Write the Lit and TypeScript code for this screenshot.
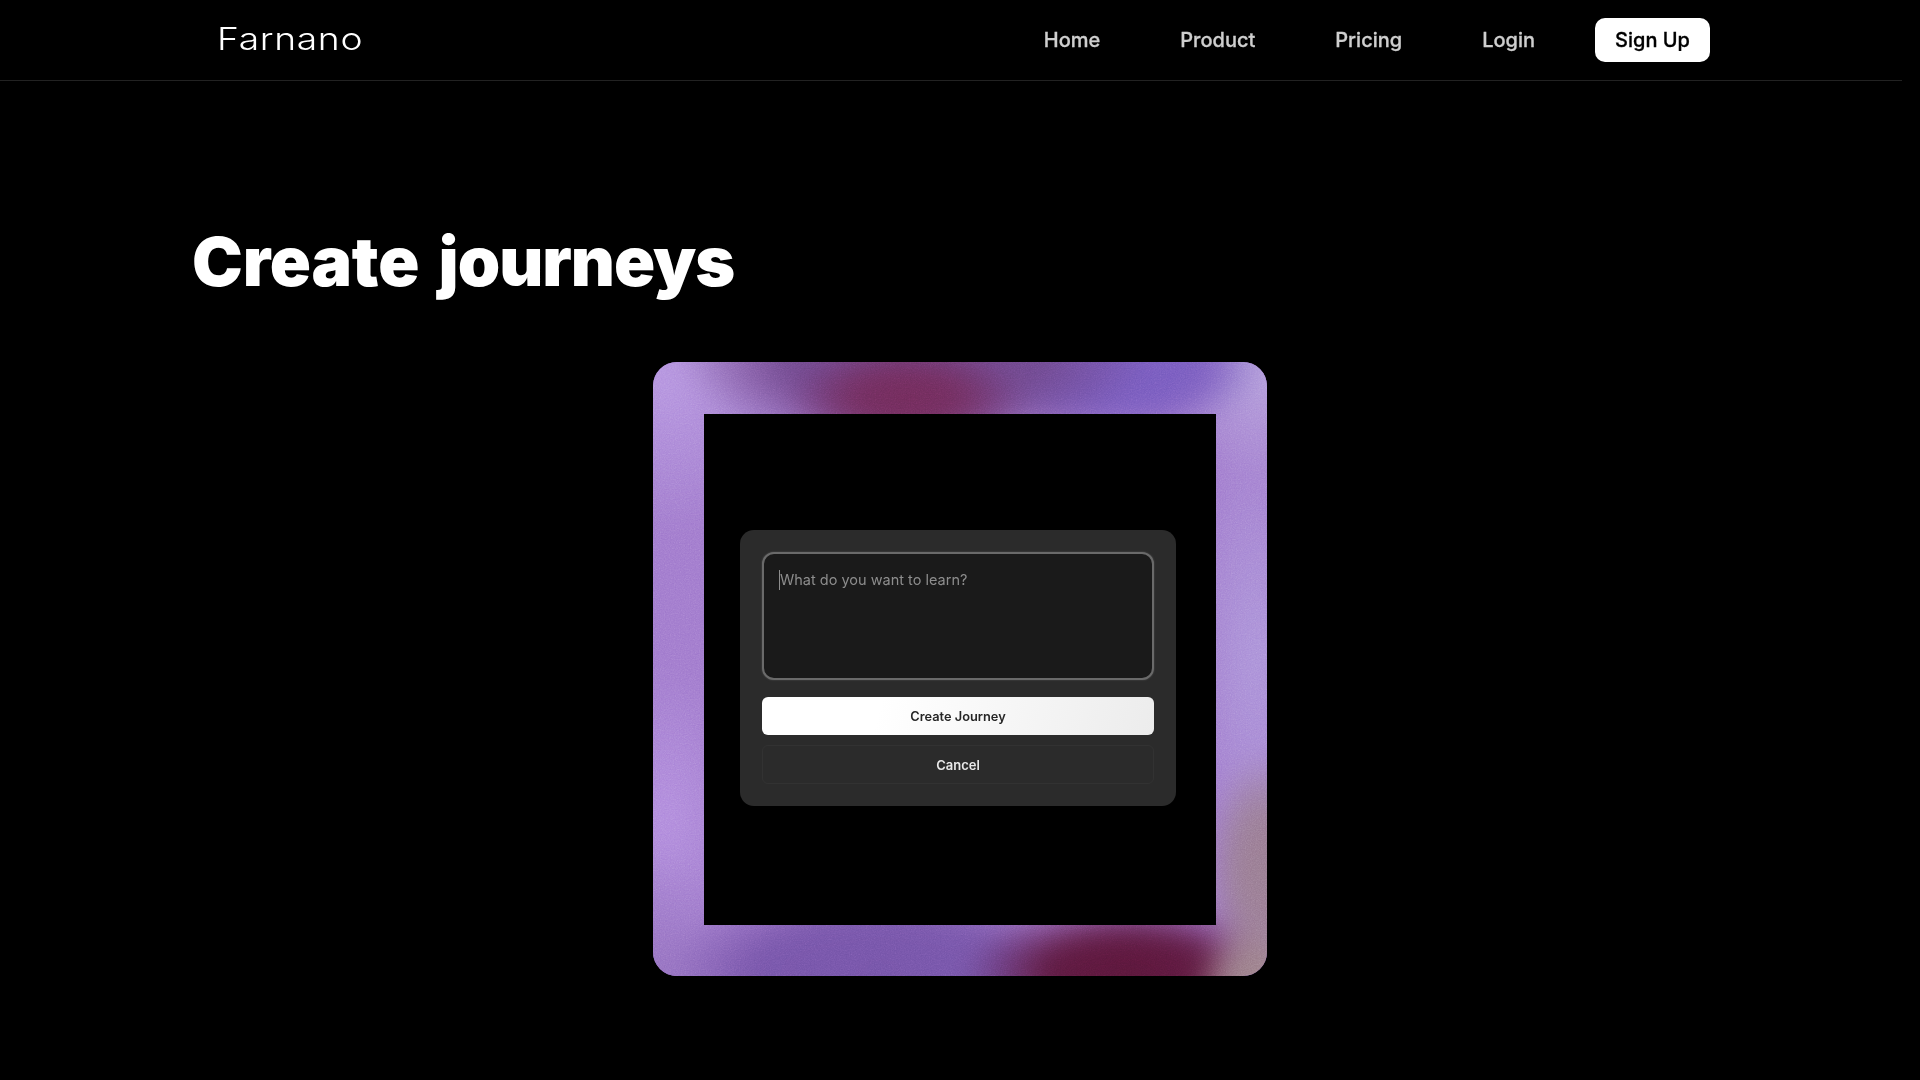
import { LitElement, html, css } from "lit";
import { customElement } from "lit/decorators.js";

@customElement("app-root")
export class AppRoot extends LitElement {
  static styles = css`
    :host {
      display: block;
      min-height: 1080px;
      background: #000;
      font-family: Inter, "Liberation Sans", sans-serif;
      color: #fff;
    }
    .header {
      width: 1902px;
      height: 81px;
      box-sizing: border-box;
      border-bottom: 1px solid #222;
      display: flex;
      align-items: center;
      padding: 0 192px 0 217px;
    }
    .logo {
      font-size: 31px;
      font-weight: 300;
      letter-spacing: 0.55px;
      transform: scaleX(1.2);
      transform-origin: left center;
      line-height: 1;
      margin-right: auto;
      position: relative;
      top: -2px;
    }
    .nav { display: flex; align-items: center; gap: 80px; }
    .nav a {
      font-size: 20px;
      font-weight: 500;
      color: #cfcfcf;
      line-height: 24px;
      -webkit-text-stroke: 0.3px #cfcfcf;
    }
    .signup {
      margin-left: -20px;
      width: 115px;
      height: 44px;
      background: #fff;
      border-radius: 10px;
      color: #000;
      font-size: 20px;
      font-weight: 500;
      -webkit-text-stroke: 0.3px #000;
      display: flex;
      align-items: center;
      justify-content: center;
    }
    h1 {
      margin: 0;
      padding: 140px 0 0 192px;
      font-size: 68px;
      line-height: 80px;
      font-weight: 900;
      letter-spacing: -0.2px;
      word-spacing: 6px;
    }
    h1 span { letter-spacing: -1px; }
    .stage { display: flex; justify-content: center; padding-top: 61px; }
    .card {
      position: relative;
      width: 614px;
      height: 614px;
      box-sizing: border-box;
      padding: 52px 51px 51px;
      border-radius: 24px;
      overflow: hidden;
      background: #9f78cc;
    }
    .glow {
      position: absolute;
      inset: -30px;
      filter: blur(12px);
      background:
        radial-gradient(ellipse 62px 72px at 94% 98%, #9c8089 0, rgba(156,128,137,.95) 50%, rgba(156,128,137,0) 100%),
        radial-gradient(ellipse 60px 120px at 95% 80%, #977a8e 0, rgba(151,122,142,.9) 50%, rgba(151,122,142,0) 100%),
        radial-gradient(ellipse 165px 72px at 75% 95%, #581538 0, rgba(88,21,56,.95) 50%, rgba(88,21,56,0) 100%),
        radial-gradient(ellipse 120px 60px at 42% 10%, #6f2a58 0, rgba(111,42,88,.9) 45%, rgba(111,42,88,0) 100%),
        radial-gradient(ellipse 235px 95px at 43% 4%, #6c4689 0, rgba(108,70,137,.95) 55%, rgba(108,70,137,0) 100%),
        radial-gradient(ellipse 150px 72px at 73% 5%, #7459bd 0, rgba(116,89,189,.95) 60%, rgba(116,89,189,0) 100%),
        radial-gradient(ellipse 215px 88px at 38% 95%, #7252a6 0, rgba(114,82,166,.95) 60%, rgba(114,82,166,0) 100%),
        radial-gradient(ellipse 100px 130px at 5% 96%, #9370bf 0, rgba(147,112,191,0) 100%),
        radial-gradient(ellipse 100px 110px at 95% 6%, #b5a0dc 0, rgba(181,160,220,0) 100%),
        radial-gradient(ellipse 70px 240px at 94% 48%, #ab93d9 0, rgba(171,147,217,0) 100%),
        radial-gradient(ellipse 150px 150px at 6% 7%, #b594e0 0, rgba(181,148,224,0) 100%),
        radial-gradient(ellipse 80px 150px at 6% 72%, #b28cde 0, rgba(178,140,222,0) 100%),
        #9f78cc;
    }
    .grain {
      position: absolute;
      inset: 0;
      width: 100%;
      height: 100%;
      opacity: 0.3;
      mix-blend-mode: overlay;
      pointer-events: none;
    }
    .inner {
      position: relative;
      width: 512px;
      height: 511px;
      background: #000;
      display: flex;
      align-items: center;
      padding: 0 4px 3px 0;
      box-sizing: border-box;
      justify-content: center;
    }
    .dialog {
      width: 436px;
      height: 276px;
      box-sizing: border-box;
      padding: 22px;
      background: #2b2b2b;
      border-radius: 14px;
      display: flex;
      flex-direction: column;
      filter: blur(0.55px);
    }
    .input {
      height: 128px;
      box-sizing: border-box;
      background: #1a1a1a;
      border: 2px solid #6a6a6a;
      border-radius: 12px;
      padding: 16px 15px;
      font-size: 14.5px;
      line-height: 20px;
      color: #8d8d8d;
      box-shadow: 0 0 2px #555;
      display: flex;
    }
    .caret { width: 1px; height: 20px; background: #8d8d8d; flex: none; }
    .btn {
      height: 38px;
      border-radius: 6px;
      display: flex;
      align-items: center;
      justify-content: center;
      font-size: 13px;
      font-weight: 600;
      box-sizing: border-box;
    }
    .primary {
      margin-top: 17px;
      padding-top: 1px;
      font-size: 12.8px;
      background: linear-gradient(105deg, #fff 0%, #fff 30%, #ececec 100%);
      color: #262626;
    }
    .secondary {
      margin-top: 10px;
      height: 39px;
      border: 1px solid #323232;
      color: #e8e8e8;
    }
  `;

  render() {
    return html`
      <header class="header">
        <div class="logo">Farnano</div>
        <nav class="nav">
          <a>Home</a><a>Product</a><a>Pricing</a><a>Login</a>
          <div class="signup">Sign Up</div>
        </nav>
      </header>
      <h1>Create <span>journeys</span></h1>
      <div class="stage">
        <div class="card">
          <div class="glow"></div>
          <svg class="grain" aria-hidden="true">
            <filter id="n"><feTurbulence type="fractalNoise" baseFrequency="0.8" numOctaves="2" stitchTiles="stitch"></feTurbulence><feColorMatrix type="saturate" values="0"></feColorMatrix></filter>
            <rect width="100%" height="100%" filter="url(#n)"></rect>
          </svg>
          <div class="inner">
            <div class="dialog">
              <div class="input"><span class="caret"></span><span>What do you want to learn?</span></div>
              <div class="btn primary">Create Journey</div>
              <div class="btn secondary">Cancel</div>
            </div>
          </div>
        </div>
      </div>
    `;
  }
}
